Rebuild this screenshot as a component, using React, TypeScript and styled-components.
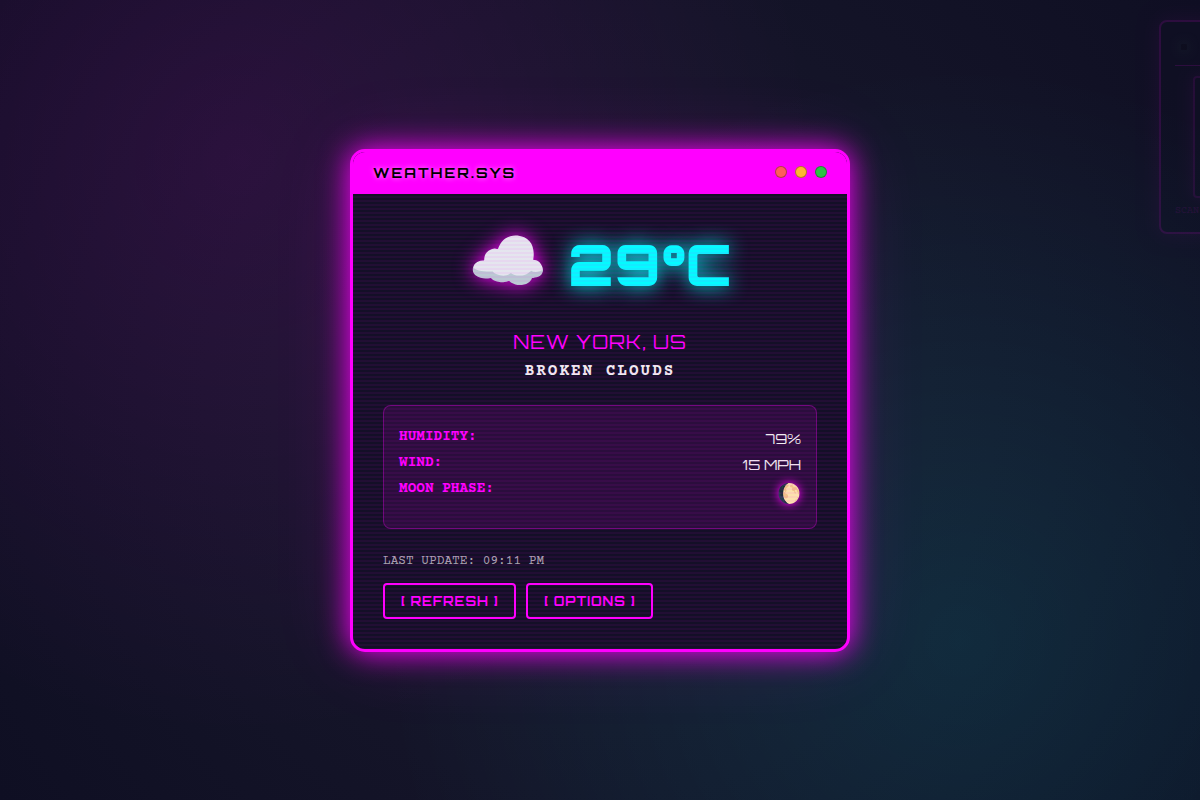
import React from "react";
import styled, { createGlobalStyle } from "styled-components";

const display = `"Orbitron", "Inter", sans-serif`;
const mono = `"Courier Prime", "Courier New", "Liberation Mono", monospace`;
const emoji = `"Noto Color Emoji", sans-serif`;

const Global = createGlobalStyle`
  * { box-sizing: border-box; margin: 0; padding: 0; }
  body { background: #0f0f23; overflow: hidden; }
`;

const Screen = styled.main`
  position: relative;
  width: 100vw;
  height: 100vh;
  display: flex;
  align-items: center;
  justify-content: center;
  overflow: hidden;
  font-family: ${mono};
  background:
    radial-gradient(circle at 20% 20%, rgba(255, 0, 255, 0.1) 0%, transparent 50%),
    radial-gradient(circle at 80% 80%, rgba(0, 255, 255, 0.1) 0%, transparent 50%),
    radial-gradient(circle at center, #1a1a2e 0%, #0f0f23 100%);
`;

const Window = styled.section`
  position: relative;
  width: 500px;
  border: 3px solid #ff00ff;
  border-radius: 15px;
  background: #0f0f23;
  box-shadow: 0 0 30px #ff00ff, 0 0 80px rgba(255, 0, 255, 0.14);
`;

const TitleBar = styled.header`
  height: 42px;
  padding: 0 20px;
  display: flex;
  align-items: center;
  justify-content: space-between;
  background: #ff00ff;
  border-radius: 12px 12px 0 0;
`;

const Title = styled.h1`
  font: 700 14px ${display};
  letter-spacing: 2px;
  color: #000;
  text-shadow: 0 0 5px rgba(255, 255, 255, 0.6);
`;

const Lights = styled.div`
  display: flex;
  gap: 8px;
  margin-bottom: 2px;
`;

const Light = styled.span<{ $color: string }>`
  width: 12px;
  height: 12px;
  border-radius: 50%;
  border: 1px solid rgba(0, 0, 0, 0.3);
  background: ${(p) => p.$color};
`;

const Body = styled.div`
  position: relative;
  padding: 30px;

  &::after {
    content: "";
    position: absolute;
    inset: 0;
    border-radius: 0 0 12px 12px;
    pointer-events: none;
    background: repeating-linear-gradient(
      180deg,
      rgba(255, 0, 255, 0.02) 0,
      rgba(255, 0, 255, 0.02) 2px,
      rgba(255, 0, 255, 0.08) 2px,
      rgba(255, 0, 255, 0.08) 4px
    );
  }
`;

const Now = styled.div`
  display: flex;
  justify-content: center;
  align-items: center;
  gap: 20px;
  height: 82px;
  margin-bottom: 24px;
`;

const Cloud = styled.span`
  font: 64px/1 ${emoji};
  padding-bottom: 6px;
  text-shadow: 0 0 20px #ff00ff;
`;

const Temp = styled.span`
  font: 900 56px ${display};
  color: #00ffff;
  text-shadow: 0 0 20px #00ffff;
`;

const City = styled.h2`
  font: 400 19.2px/24px ${display};
  letter-spacing: 1px;
  color: #ff00ff;
  text-align: center;
`;

const Sky = styled.p`
  font: 700 16px/18px ${mono};
  letter-spacing: 2px;
  color: #f0f0f0;
  text-align: center;
  margin: 8px 0 25px;
`;

const Details = styled.dl`
  padding: 15px;
  border: 1px solid rgba(255, 0, 255, 0.3);
  border-radius: 8px;
  background: rgba(255, 0, 255, 0.1);
`;

const Row = styled.div`
  display: flex;
  justify-content: space-between;
  margin: 8px 0;
`;

const Label = styled.dt`
  font: 700 14.4px ${mono};
  color: #ff00ff;
`;

const Value = styled.dd`
  font: 400 14.4px/18px ${display};
  color: #f0f0f0;
`;

const Moon = styled.dd`
  height: 24px;
  font: 19.2px/26px ${emoji};
  text-shadow: 0 0 10px #ff00ff;
`;

const Updated = styled.p`
  margin: 25px 0 15px;
  font: 400 12.8px/14px ${mono};
  color: rgba(255, 255, 255, 0.65);
`;

const Actions = styled.div`
  display: flex;
  gap: 10px;
`;

const Button = styled.button`
  padding: 8px 16px;
  border: 2px solid #ff00ff;
  border-radius: 4px;
  background: transparent;
  color: #ff00ff;
  font: 700 12.8px/16px ${display};
  letter-spacing: 1px;
`;

const Scanner = styled.aside`
  position: absolute;
  top: 20px;
  left: 1159px;
  width: 188px;
  height: 214px;
  padding: 14px;
  border: 2px solid #ff00ff;
  border-radius: 8px;
  background: #0f0f23;
  box-shadow: 0 0 20px rgba(255, 0, 255, 0.5);
  opacity: 0.12;
`;

const ScannerHead = styled.div`
  height: 30px;
  padding: 8px 6px;
  border-bottom: 1px solid #ff00ff;
`;

const Beacon = styled.span`
  display: block;
  width: 6px;
  height: 6px;
  background: #000;
  border-radius: 1px;
  box-shadow: 0 0 8px 3px rgba(90, 170, 120, 0.35);
`;

const Radar = styled.div`
  width: 120px;
  height: 122px;
  margin: 10px auto 6px;
  border: 2px solid rgba(255, 0, 255, 0.75);
  border-radius: 4px;
  box-shadow: 0 0 15px rgba(255, 0, 255, 0.5);
`;

const ScanText = styled.div`
  font: 400 10px/14px ${mono};
  color: rgba(255, 0, 255, 0.7);
`;

export default function App() {
  return (
    <Screen>
      <Global />
      <Scanner>
        <ScannerHead>
          <Beacon />
        </ScannerHead>
        <Radar />
        <ScanText>SCAN</ScanText>
      </Scanner>
      <Window>
        <TitleBar>
          <Title>WEATHER.SYS</Title>
          <Lights>
            <Light $color="#ff5c5c" />
            <Light $color="#ffb432" />
            <Light $color="#2ec045" />
          </Lights>
        </TitleBar>
        <Body>
          <Now>
            <Cloud>☁️</Cloud>
            <Temp>29°C</Temp>
          </Now>
          <City>NEW YORK, US</City>
          <Sky>BROKEN CLOUDS</Sky>
          <Details>
            <Row>
              <Label>HUMIDITY:</Label>
              <Value>79%</Value>
            </Row>
            <Row>
              <Label>WIND:</Label>
              <Value>15 MPH</Value>
            </Row>
            <Row>
              <Label>MOON PHASE:</Label>
              <Moon>🌔</Moon>
            </Row>
          </Details>
          <Updated>LAST UPDATE: 09:11 PM</Updated>
          <Actions>
            <Button>[ REFRESH ]</Button>
            <Button>[ OPTIONS ]</Button>
          </Actions>
        </Body>
      </Window>
    </Screen>
  );
}
